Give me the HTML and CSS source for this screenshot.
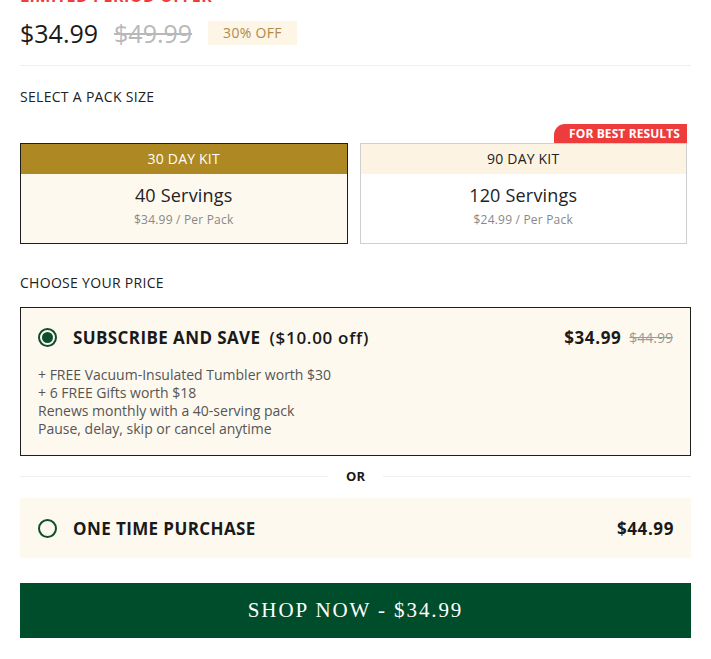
FILE: index.html
```html
<!DOCTYPE html>
<html>
<head>
<meta charset="utf-8">
<link rel="stylesheet" href="styles.css">
</head>
<body>
<div class="page">
  <div class="promo">LIMITED PERIOD OFFER</div>
  <div class="price-row">
    <span class="price-now">$34.99</span>
    <span class="price-old">$49.99</span>
    <span class="off-badge">30% OFF</span>
  </div>
  <div class="divider"></div>
  <div class="label label-pack">SELECT A PACK SIZE</div>
  <div class="packs">
    <div class="pack pack-selected">
      <div class="pack-head">30 DAY KIT</div>
      <div class="pack-body">
        <div class="servings">40 Servings</div>
        <div class="per">$34.99 / Per Pack</div>
      </div>
    </div>
    <div class="pack">
      <span class="best">FOR BEST RESULTS</span>
      <div class="pack-head">90 DAY KIT</div>
      <div class="pack-body">
        <div class="servings">120 Servings</div>
        <div class="per">$24.99 / Per Pack</div>
      </div>
    </div>
  </div>
  <div class="label label-price">CHOOSE YOUR PRICE</div>
  <div class="option option-active">
    <div class="option-row">
      <span class="radio radio-on"></span>
      <span class="option-title">SUBSCRIBE AND SAVE</span>
      <span class="option-save">($10.00 off)</span>
      <span class="option-price">$34.99</span>
      <span class="option-old">$44.99</span>
    </div>
    <ul class="perks">
      <li>+ FREE Vacuum-Insulated Tumbler worth $30</li>
      <li>+ 6 FREE Gifts worth $18</li>
      <li>Renews monthly with a 40-serving pack</li>
      <li>Pause, delay, skip or cancel anytime</li>
    </ul>
  </div>
  <div class="or-row"><span class="or-line"></span><span class="or-text">OR</span><span class="or-line"></span></div>
  <div class="option option-plain">
    <div class="option-row">
      <span class="radio"></span>
      <span class="option-title">ONE TIME PURCHASE</span>
      <span class="option-price">$44.99</span>
    </div>
  </div>
  <button class="shop">SHOP NOW - $34.99</button>
</div>
</body>
</html>
```
FILE: styles.css
```css
* { box-sizing: border-box; }
html, body { margin: 0; padding: 0; background: #fff; }
body { font-family: "Open Sans", Lato, sans-serif; color: #222; overflow: hidden; }
.page { padding: 0 20px; width: 711px; }

.promo {
  height: 20px;
  line-height: 20px;
  margin-top: -14px;
  color: #ee3b3b;
  font-weight: 700;
  font-size: 16px;
  letter-spacing: 0.5px;
}

.price-row {
  display: flex;
  align-items: center;
  height: 24px;
  margin-top: 15px;
}
.price-now { font-size: 25px; color: #1a1a1a; }
.price-old { font-size: 25px; color: #b8b8b8; text-decoration: line-through; margin-left: 16px; }
.off-badge {
  margin-left: 16px;
  height: 24px;
  line-height: 24px;
  padding: 0 15px;
  background: #fdf5e6;
  color: #b08a4a;
  font-size: 14px;
  letter-spacing: 0.3px;
}

.divider { height: 1px; background: #efefef; margin-top: 20px; }

.label { font-size: 14px; line-height: 16px; letter-spacing: 0.3px; color: #222; }
.label-pack { margin-top: 23px; }
.label-price { margin-top: 31px; }

.packs {
  display: grid;
  grid-template-columns: 1fr 1fr;
  gap: 12px;
  margin-top: 38px;
  margin-right: 4px;
}
.pack {
  position: relative;
  border: 1px solid #cfcfcf;
  background: #fff;
  text-align: center;
}
.pack-head {
  height: 30px;
  line-height: 30px;
  font-size: 14px;
  background: #fdf3e3;
  color: #222;
  letter-spacing: 0.2px;
}
.pack-body { height: 69px; padding-top: 10px; }
.servings { font-size: 18px; line-height: 22px; letter-spacing: 0.2px; color: #222; }
.per { font-size: 12px; line-height: 14px; margin-top: 7px; color: #888; letter-spacing: 0.2px; }
.pack-selected { border-color: #1e1e1e; }
.pack-selected .pack-head { background: #ad8823; color: #fff; }
.pack-selected .pack-body { background: #fdf9ef; }
.best {
  position: absolute;
  right: -1px;
  top: -20px;
  height: 19px;
  line-height: 19px;
  padding: 0 7px 0 15px;
  background: #ee3b3b;
  color: #fff;
  font-size: 12px;
  font-weight: 700;
  letter-spacing: 0.1px;
  border-radius: 11px 0 0 0;
}

.option {
  background: #fdf9ef;
  padding: 0 17px;
}
.option-active {
  border: 1px solid #1e1e1e;
  margin-top: 16px;
  padding-top: 18px;
  padding-bottom: 17px;
}
.option-plain {
  margin-top: 14px;
  height: 60px;
  display: flex;
  align-items: center;
  padding-left: 18px;
}
.option-plain .option-row { width: 100%; }
.option-row {
  display: flex;
  align-items: center;
  height: 22px;
}
.radio {
  width: 19px;
  height: 19px;
  border-radius: 50%;
  border: 2px solid #0c4f30;
  flex: none;
  display: flex;
  align-items: center;
  justify-content: center;
}
.radio-on::after {
  content: "";
  width: 11px;
  height: 11px;
  border-radius: 50%;
  background: #0c4f30;
}
.option-title { margin-left: 16px; font-size: 17px; font-weight: 700; letter-spacing: 0.4px; color: #1a1a1a; }
.option-save { margin-left: 9px; font-size: 17px; font-weight: 600; letter-spacing: 0.7px; color: #1a1a1a; }
.option-price { margin-left: auto; font-size: 17px; font-weight: 700; letter-spacing: 0.6px; color: #1a1a1a; }
.option-old { margin-left: 8px; font-size: 14px; color: #999; text-decoration: line-through; }

.perks {
  list-style: none;
  margin: 18px 0 0;
  padding: 0;
  font-size: 14px;
  line-height: 18px;
  color: #555;
}

.or-row {
  display: flex;
  align-items: center;
  margin-top: 12px;
  height: 16px;
}
.or-line { flex: 1; height: 1px; background: #f0f0f0; }
.or-text { font-size: 13px; font-weight: 700; margin: 0 18px; color: #1a1a1a; }

.shop {
  display: block;
  width: 100%;
  margin-top: 25px;
  height: 55px;
  border: 0;
  background: #004d2b;
  color: #fff;
  font-family: "Liberation Serif", "DejaVu Serif", serif;
  font-size: 21px;
  letter-spacing: 1.9px;
  cursor: pointer;
}
```
